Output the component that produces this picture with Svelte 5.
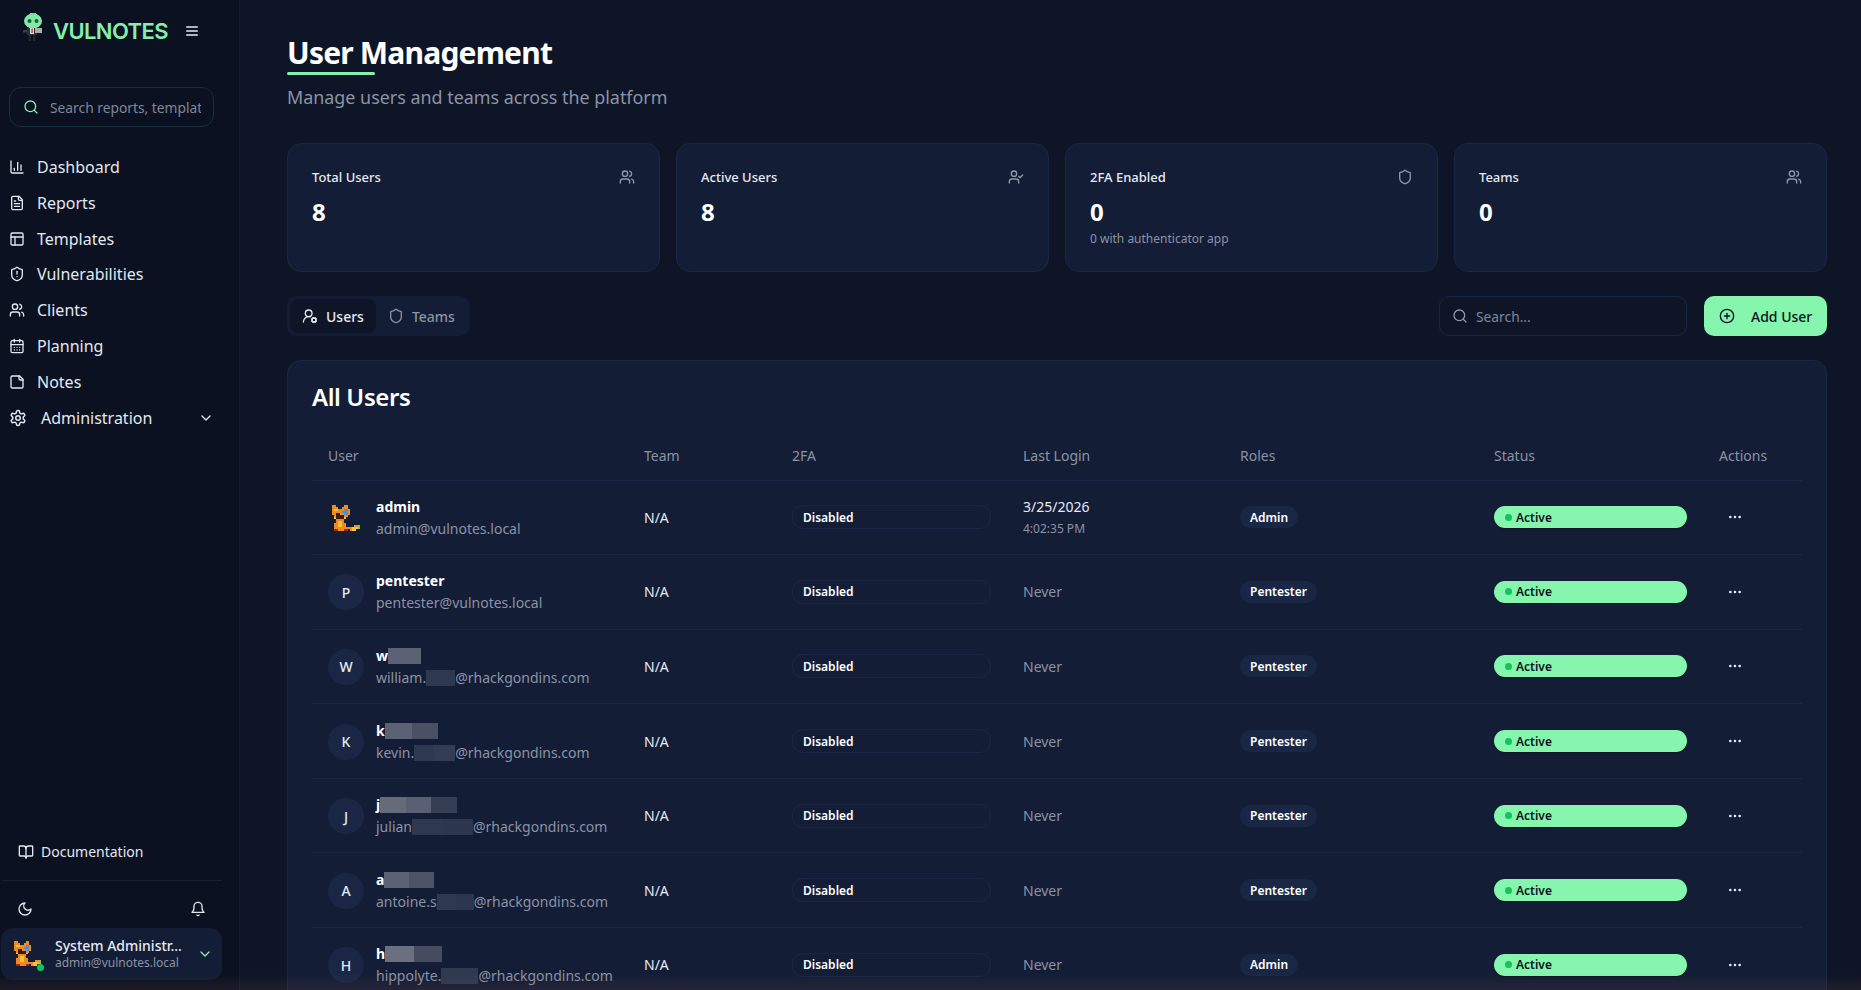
<script>
	const foxMap = [
		'oo....oo......',
		'ooo..ooo......',
		'oyyooobbo.....',
		'ooooobbbo.....',
		'ookkoobbo.....',
		'.okkkkoo......',
		'.ykkkky.......',
		'..oooo........',
		'..oyyo........',
		'.ooyyoo.......',
		'.ooyyoo....oog',
		'.oooooooooyyyg',
		'.rrooorr.oyy..'
	];
	const foxColors = { o: '#f08a1c', y: '#fbc23a', b: '#4f8fd0', k: '#3a1c14', r: '#a8261c', g: '#8fbf4a' };
	const foxPixels = foxMap.flatMap((row, y) =>
		[...row].flatMap((c, x) => (foxColors[c] ? [{ x, y, fill: foxColors[c] }] : []))
	);

	const nav = [
		{ icon: 'chart', label: 'Dashboard' },
		{ icon: 'file', label: 'Reports' },
		{ icon: 'layout', label: 'Templates' },
		{ icon: 'shieldAlert', label: 'Vulnerabilities' },
		{ icon: 'users', label: 'Clients' },
		{ icon: 'calendar', label: 'Planning' },
		{ icon: 'note', label: 'Notes' }
	];

	const stats = [
		{ label: 'Total Users', value: '8', icon: 'users' },
		{ label: 'Active Users', value: '8', icon: 'userCheck' },
		{ label: '2FA Enabled', value: '0', icon: 'shield', sub: '0 with authenticator app' },
		{ label: 'Teams', value: '0', icon: 'users' }
	];

	// blur: [width, colour] slices laid over the redacted part of a name or an email
	const users = [
		{ fox: true, name: 'admin', email: 'admin@vulnotes.local', role: 'Admin', login: ['3/25/2026', '4:02:35 PM'] },
		{ initial: 'P', name: 'pentester', email: 'pentester@vulnotes.local', role: 'Pentester' },
		{
			initial: 'W', name: 'w', nameBlur: [[33, '#5b6275']],
			email: 'william.', emailBlur: [[29, '#2e3850']], domain: '@rhackgondins.com', role: 'Pentester'
		},
		{
			initial: 'K', name: 'k', nameBlur: [[27, '#5b6275'], [26, '#4a5165']],
			email: 'kevin.', emailBlur: [[20, '#2e3850'], [21, '#333c54']], domain: '@rhackgondins.com', role: 'Pentester'
		},
		{
			initial: 'J', name: 'j', nameBlur: [[26, '#666b7c'], [25, '#5a6073'], [26, '#363e54']],
			email: 'julian', emailBlur: [[30, '#2e3850'], [31, '#2c364e']], domain: '@rhackgondins.com', role: 'Pentester'
		},
		{
			initial: 'A', name: 'a', nameBlur: [[25, '#5b6275'], [25, '#4d5468']],
			email: 'antoine.s', emailBlur: [[19, '#2f3950'], [18, '#2c364e']], domain: '@rhackgondins.com', role: 'Pentester'
		},
		{
			initial: 'H', name: 'h', nameBlur: [[29, '#6a7080'], [28, '#454c60']],
			email: 'hippolyte.', emailBlur: [[37, '#2f3950']], domain: '@rhackgondins.com', role: 'Admin'
		}
	];
</script>

{#snippet icon(name, size = 16)}
	<svg class="icon" width={size} height={size} viewBox="0 0 24 24" fill="none" stroke="currentColor" stroke-width="2" stroke-linecap="round" stroke-linejoin="round">
		{#if name === 'chart'}
			<path d="M3 3v16a2 2 0 0 0 2 2h16" /><path d="M18 17V9" /><path d="M13 17V5" /><path d="M8 17v-3" />
		{:else if name === 'file'}
			<path d="M15 2H6a2 2 0 0 0-2 2v16a2 2 0 0 0 2 2h12a2 2 0 0 0 2-2V7Z" /><path d="M14 2v4a2 2 0 0 0 2 2h4" /><path d="M10 9H8" /><path d="M16 13H8" /><path d="M16 17H8" />
		{:else if name === 'layout'}
			<rect width="18" height="18" x="3" y="3" rx="2" /><path d="M3 9h18" /><path d="M9 21V9" />
		{:else if name === 'shieldAlert'}
			<path d="M20 13c0 5-3.5 7.5-7.66 8.95a1 1 0 0 1-.67-.01C7.5 20.5 4 18 4 13V6a1 1 0 0 1 1-1c2 0 4.5-1.2 6.24-2.72a1.17 1.17 0 0 1 1.52 0C14.51 3.81 17 5 19 5a1 1 0 0 1 1 1z" /><path d="M12 8v4" /><path d="M12 16h.01" />
		{:else if name === 'shield'}
			<path d="M20 13c0 5-3.5 7.5-7.66 8.95a1 1 0 0 1-.67-.01C7.5 20.5 4 18 4 13V6a1 1 0 0 1 1-1c2 0 4.5-1.2 6.24-2.72a1.17 1.17 0 0 1 1.52 0C14.51 3.81 17 5 19 5a1 1 0 0 1 1 1z" />
		{:else if name === 'users'}
			<path d="M16 21v-2a4 4 0 0 0-4-4H6a4 4 0 0 0-4 4v2" /><circle cx="9" cy="7" r="4" /><path d="M22 21v-2a4 4 0 0 0-3-3.87" /><path d="M16 3.13a4 4 0 0 1 0 7.75" />
		{:else if name === 'userCheck'}
			<path d="M16 21v-2a4 4 0 0 0-4-4H6a4 4 0 0 0-4 4v2" /><circle cx="9" cy="7" r="4" /><polyline points="16 11 18 13 22 9" />
		{:else if name === 'userCog'}
			<path d="M2 21a8 8 0 0 1 10.434-7.62" /><circle cx="10" cy="8" r="5" /><circle cx="18" cy="18" r="3" /><path d="m14.305 19.53.923-.382" /><path d="m15.228 16.852-.923-.383" /><path d="m16.852 15.228-.383-.923" /><path d="m16.852 20.772-.383.924" /><path d="m19.148 15.228.383-.923" /><path d="m19.53 21.696-.382-.924" /><path d="m20.772 16.852.924-.383" /><path d="m20.772 19.148.924.383" />
		{:else if name === 'calendar'}
			<path d="M8 2v4" /><path d="M16 2v4" /><rect width="18" height="18" x="3" y="4" rx="2" /><path d="M3 10h18" /><path d="M8 14h.01" /><path d="M12 14h.01" /><path d="M16 14h.01" /><path d="M8 18h.01" /><path d="M12 18h.01" /><path d="M16 18h.01" />
		{:else if name === 'note'}
			<path d="M16 3H5a2 2 0 0 0-2 2v14a2 2 0 0 0 2 2h14a2 2 0 0 0 2-2V8Z" /><path d="M15 3v4a2 2 0 0 0 2 2h4" />
		{:else if name === 'gear'}
			<path d="M12.22 2h-.44a2 2 0 0 0-2 2v.18a2 2 0 0 1-1 1.73l-.43.25a2 2 0 0 1-2 0l-.15-.08a2 2 0 0 0-2.73.73l-.22.38a2 2 0 0 0 .73 2.73l.15.1a2 2 0 0 1 1 1.72v.51a2 2 0 0 1-1 1.74l-.15.09a2 2 0 0 0-.73 2.73l.22.38a2 2 0 0 0 2.73.73l.15-.08a2 2 0 0 1 2 0l.43.25a2 2 0 0 1 1 1.73V20a2 2 0 0 0 2 2h.44a2 2 0 0 0 2-2v-.18a2 2 0 0 1 1-1.73l.43-.25a2 2 0 0 1 2 0l.15.08a2 2 0 0 0 2.73-.73l.22-.39a2 2 0 0 0-.73-2.73l-.15-.08a2 2 0 0 1-1-1.74v-.5a2 2 0 0 1 1-1.74l.15-.09a2 2 0 0 0 .73-2.73l-.22-.38a2 2 0 0 0-2.73-.73l-.15.08a2 2 0 0 1-2 0l-.43-.25a2 2 0 0 1-1-1.73V4a2 2 0 0 0-2-2z" /><circle cx="12" cy="12" r="3" />
		{:else if name === 'chevron'}
			<path d="m6 9 6 6 6-6" />
		{:else if name === 'book'}
			<path d="M12 7v14" /><path d="M3 18a1 1 0 0 1-1-1V4a1 1 0 0 1 1-1h5a4 4 0 0 1 4 4 4 4 0 0 1 4-4h5a1 1 0 0 1 1 1v13a1 1 0 0 1-1 1h-6a3 3 0 0 0-3 3 3 3 0 0 0-3-3z" />
		{:else if name === 'moon'}
			<path d="M12 3a6 6 0 0 0 9 9 9 9 0 1 1-9-9Z" />
		{:else if name === 'bell'}
			<path d="M6 8a6 6 0 0 1 12 0c0 7 3 9 3 9H3s3-2 3-9" /><path d="M10.3 21a1.94 1.94 0 0 0 3.4 0" />
		{:else if name === 'menu'}
			<path d="M4 6h16" /><path d="M4 12h16" /><path d="M4 18h16" />
		{:else if name === 'search'}
			<circle cx="11" cy="11" r="8" /><path d="m21 21-4.3-4.3" />
		{:else if name === 'plus'}
			<circle cx="12" cy="12" r="10" /><path d="M8 12h8" /><path d="M12 8v8" />
		{:else if name === 'dots'}
			<circle cx="12" cy="12" r="1" /><circle cx="19" cy="12" r="1" /><circle cx="5" cy="12" r="1" />
		{/if}
	</svg>
{/snippet}

{#snippet fox(width)}
	<svg class="fox" {width} viewBox="0 0 14 13" shape-rendering="crispEdges">
		{#each foxPixels as p}
			<rect x={p.x} y={p.y} width="1" height="1" fill={p.fill} />
		{/each}
	</svg>
{/snippet}

{#snippet blur(slices)}
	<span class="blur">{#each slices as [w, c]}<i style="width:{w}px;background:{c}"></i>{/each}</span>
{/snippet}

<div class="shell">
	<aside class="sidebar">
		<div class="brand">
			<svg class="mascot" width="22" height="28" viewBox="0 0 22 28">
				<ellipse cx="11" cy="8" rx="9" ry="7.5" fill="#7eeaa2" />
				<rect x="8" y="0" width="6" height="2" fill="#6fdc94" />
				<circle cx="7.5" cy="8" r="2" fill="#24574a" />
				<circle cx="14.5" cy="8" r="2" fill="#24574a" />
				<rect x="5" y="15" width="10" height="7" fill="#2a2f3a" />
				<rect x="8" y="15" width="4" height="6" fill="#d8dde2" />
				<rect x="9.4" y="15.5" width="1.4" height="4.5" fill="#b83a3a" />
				<rect x="13" y="15" width="7" height="5" fill="#a7b0ad" />
				<rect x="1" y="17" width="4" height="2.5" fill="#3a3f4a" />
				<rect x="6.5" y="22" width="2.4" height="6" fill="#23262f" />
				<rect x="11" y="22" width="2.4" height="6" fill="#23262f" />
			</svg>
			<span class="wordmark">VULNOTES</span>
			<span class="burger">{@render icon('menu')}</span>
		</div>

		<label class="side-search">
			{@render icon('search')}
			<input placeholder="Search reports, templates..." />
		</label>

		<nav class="nav">
			{#each nav as item}
				<a class="nav-item">{@render icon(item.icon)}<span>{item.label}</span></a>
			{/each}
			<a class="nav-item admin">
				{@render icon('gear', 18)}<span>Administration</span>{@render icon('chevron')}
			</a>
		</nav>

		<div class="side-bottom">
			<a class="doc-link">{@render icon('book')}<span>Documentation</span></a>
			<div class="side-tools">
				{@render icon('moon')}
				{@render icon('bell')}
			</div>
			<div class="me">
				<span class="me-avatar">{@render fox(27)}<b class="online"></b></span>
				<span class="me-text">
					<strong>System Administr...</strong>
					<small>admin@vulnotes.local</small>
				</span>
				<span class="me-chevron">{@render icon('chevron')}</span>
			</div>
		</div>
	</aside>

	<main class="main">
		<header class="page-head">
			<h1>User Management</h1>
			<p>Manage users and teams across the platform</p>
		</header>

		<section class="stats">
			{#each stats as s}
				<div class="stat">
					<div class="stat-top"><span>{s.label}</span>{@render icon(s.icon)}</div>
					<div class="stat-value">{s.value}</div>
					{#if s.sub}<div class="stat-sub">{s.sub}</div>{/if}
				</div>
			{/each}
		</section>

		<div class="toolbar">
			<div class="tabs">
				<button class="tab active">{@render icon('userCog')}Users</button>
				<button class="tab">{@render icon('shield')}Teams</button>
			</div>
			<div class="actions">
				<label class="search">
					{@render icon('search')}
					<input placeholder="Search..." />
				</label>
				<button class="add">{@render icon('plus')}Add User</button>
			</div>
		</div>

		<section class="panel">
			<h2>All Users</h2>
			<table>
				<thead>
					<tr>
						<th>User</th><th>Team</th><th>2FA</th><th>Last Login</th><th>Roles</th><th>Status</th><th>Actions</th>
					</tr>
				</thead>
				<tbody>
					{#each users as u}
						<tr>
							<td>
								<div class="user">
									<span class="avatar" class:plain={u.fox}>
										{#if u.fox}{@render fox(28)}{:else}{u.initial}{/if}
									</span>
									<div class="user-text">
										<div class="name">{u.name}{#if u.nameBlur}{@render blur(u.nameBlur)}{/if}</div>
										<div class="email">{u.email}{#if u.emailBlur}{@render blur(u.emailBlur)}{/if}{u.domain ?? ''}</div>
									</div>
								</div>
							</td>
							<td class="team">N/A</td>
							<td><span class="badge-off">Disabled</span></td>
							<td>
								{#if u.login}
									<div class="date">{u.login[0]}</div>
									<div class="time">{u.login[1]}</div>
								{:else}
									<span class="never">Never</span>
								{/if}
							</td>
							<td><span class="role">{u.role}</span></td>
							<td><span class="status"><i></i>Active</span></td>
							<td><span class="more">{@render icon('dots')}</span></td>
						</tr>
					{/each}
				</tbody>
			</table>
		</section>
	</main>
</div>

<style>
	:global(body) {
		background: #0e1526;
		font-family: 'Noto Sans', sans-serif;
		color: #e6eaf2;
	}

	.shell {
		position: relative;
		display: flex;
		height: 100vh;
		overflow: hidden;
	}

	.shell::after {
		content: '';
		position: absolute;
		left: 0;
		right: 0;
		bottom: 0;
		height: 16px;
		background: linear-gradient(to bottom, transparent, rgba(130, 80, 70, 0.16));
		pointer-events: none;
	}

	.icon {
		flex: none;
		display: block;
	}

	.fox {
		display: block;
	}

	/* sidebar */
	.sidebar {
		flex: none;
		width: 240px;
		box-sizing: border-box;
		display: flex;
		flex-direction: column;
		background: #0b1120;
		border-right: 1px solid #131e36;
		padding-right: 17px;
	}

	.brand {
		display: flex;
		align-items: center;
		height: 62px;
		padding-left: 22px;
	}

	.mascot {
		margin-top: -8px;
	}

	.wordmark {
		margin-left: 9px;
		font-family: 'Inter', sans-serif;
		font-size: 22px;
		font-weight: 600;
		letter-spacing: -0.6px;
		color: #86efac;
	}

	.burger {
		margin-left: 16px;
		color: #e6eaf2;
	}

	.side-search {
		display: flex;
		align-items: center;
		gap: 11px;
		height: 40px;
		margin: 25px 8px 0 9px;
		padding: 0 12px 0 13px;
		box-sizing: border-box;
		border: 1px solid #15303a;
		border-radius: 12px;
		color: #86efac;
	}

	.side-search input,
	.search input {
		min-width: 0;
		flex: 1;
		padding: 0;
		border: 0;
		outline: 0;
		background: none;
		font: 13.8px 'Noto Sans', sans-serif;
		color: #e6eaf2;
	}

	.side-search input::placeholder,
	.search input::placeholder {
		color: #7f8798;
		opacity: 1;
	}

	.nav {
		display: flex;
		flex-direction: column;
		margin-top: 22px;
	}

	.nav-item {
		display: flex;
		align-items: center;
		gap: 12px;
		height: 35.85px;
		padding-left: 9px;
		font-size: 16px;
		color: #e2e8f0;
	}

	.nav-item.admin {
		gap: 14px;
		padding-right: 8px;
	}

	.nav-item.admin span {
		flex: 1;
	}

	.side-bottom {
		margin-top: auto;
		padding-bottom: 10px;
	}

	.doc-link {
		display: flex;
		align-items: center;
		gap: 7px;
		height: 27px;
		padding-left: 17px;
		padding-bottom: 15px;
		border-bottom: 1px solid #15213a;
		margin-left: 1px;
		font-size: 14px;
		color: #e2e8f0;
	}

	.side-tools {
		display: flex;
		justify-content: space-between;
		padding: 20px 16px 11px 17px;
		color: #e2e8f0;
	}

	.me {
		display: flex;
		align-items: center;
		height: 52px;
		margin-left: 1px;
		padding: 0 9px 0 13px;
		background: #131d35;
		border-radius: 12px;
	}

	.me-avatar {
		position: relative;
		flex: none;
		width: 41px;
	}

	.online {
		position: absolute;
		left: 23px;
		bottom: -4px;
		width: 7px;
		height: 7px;
		border-radius: 50%;
		background: #11c45c;
	}

	.me-text {
		flex: 1;
		min-width: 0;
		display: flex;
		flex-direction: column;
	}

	.me-text strong {
		font-size: 14px;
		line-height: 18px;
		font-weight: 500;
		color: #e6eaf2;
	}

	.me-text small {
		font-size: 12px;
		line-height: 16px;
		color: #8b93a5;
	}

	.me-chevron {
		color: #86efac;
	}

	/* main */
	.main {
		flex: 1;
		min-width: 0;
		padding: 35px 34px 0 47px;
	}

	.page-head h1 {
		position: relative;
		margin: 0;
		font-size: 30px;
		line-height: 36px;
		font-weight: 700;
		letter-spacing: -0.8px;
		color: #fff;
	}

	.page-head h1::after {
		content: '';
		position: absolute;
		left: 0;
		bottom: -4px;
		width: 88px;
		height: 3px;
		border-radius: 2px;
		background: #86efac;
	}

	.page-head p {
		margin: 14px 0 0;
		font-size: 17.9px;
		line-height: 24px;
		color: #8b93a5;
	}

	.stats {
		display: grid;
		grid-template-columns: repeat(4, 1fr);
		gap: 16px;
		margin-top: 34px;
	}

	.stat {
		box-sizing: border-box;
		min-height: 129px;
		padding: 23px 24px 24px;
		background: #131d35;
		border: 1px solid #1a2744;
		border-radius: 14px;
	}

	.stat-top {
		display: flex;
		justify-content: space-between;
		align-items: center;
		height: 20px;
		font-size: 13px;
		font-weight: 500;
		color: #e6eaf2;
	}

	.stat-top .icon {
		color: #8f98aa;
	}

	.stat-value {
		margin-top: 9px;
		font-size: 24px;
		line-height: 32px;
		font-weight: 700;
		color: #fff;
	}

	.stat-sub {
		margin-top: 3px;
		font-size: 12px;
		line-height: 16px;
		color: #8b93a5;
	}

	.toolbar {
		display: flex;
		justify-content: space-between;
		margin-top: 24px;
	}

	.tabs {
		display: flex;
		padding: 3px;
		background: #131d35;
		border-radius: 10px;
	}

	.tab {
		display: flex;
		align-items: center;
		gap: 8px;
		height: 34px;
		padding: 0 12px;
		border: 0;
		border-radius: 8px;
		background: none;
		font: 500 14px 'Noto Sans', sans-serif;
		color: #8b93a5;
	}

	.tab.active {
		background: #0e1526;
		color: #e6eaf2;
	}

	.actions {
		display: flex;
		gap: 17px;
	}

	.search {
		display: flex;
		align-items: center;
		gap: 8px;
		box-sizing: border-box;
		width: 248px;
		height: 40px;
		padding: 0 12px;
		background: #0e1526;
		border: 1px solid #1a2744;
		border-radius: 10px;
		color: #8f98aa;
	}

	.add {
		display: flex;
		align-items: center;
		gap: 16px;
		width: 123px;
		height: 40px;
		padding: 0 15px;
		border: 0;
		border-radius: 10px;
		background: #86f5ae;
		font: 500 14px 'Noto Sans', sans-serif;
		white-space: nowrap;
		color: #0a1120;
	}

	.panel {
		margin-top: 24px;
		padding: 22px 24px 0;
		background: #131d35;
		border: 1px solid #1a2744;
		border-radius: 14px;
	}

	.panel h2 {
		margin: 0;
		font-size: 24px;
		line-height: 28px;
		font-weight: 600;
		letter-spacing: -0.4px;
		color: #fff;
	}

	table {
		width: 100%;
		margin-top: 21px;
		table-layout: fixed;
		border-collapse: collapse;
	}

	th,
	td {
		box-sizing: border-box;
		padding: 0 16px;
		text-align: left;
		border-bottom: 1px solid #1a2744;
	}

	th {
		height: 48px;
		font-size: 14px;
		font-weight: 400;
		color: #8b93a5;
	}

	th:nth-child(1) { width: 316px; }
	th:nth-child(2) { width: 148px; }
	th:nth-child(3) { width: 231px; }
	th:nth-child(4) { width: 217px; }
	th:nth-child(5) { width: 254px; }
	th:nth-child(6) { width: 225px; }

	td {
		height: 74.6px;
		font-size: 14px;
	}

	.user {
		display: flex;
		align-items: center;
		gap: 12px;
		margin-top: 1px;
	}

	.avatar {
		flex: none;
		display: flex;
		align-items: center;
		justify-content: center;
		width: 36px;
		height: 36px;
		border-radius: 50%;
		background: #1a2744;
		font-weight: 500;
		color: #e6eaf2;
	}

	.avatar.plain {
		background: none;
	}

	.user-text {
		display: flex;
		flex-direction: column;
		gap: 2px;
		white-space: nowrap;
	}

	.name {
		line-height: 20px;
		font-weight: 700;
		color: #fff;
	}

	.email {
		line-height: 20px;
		color: #8b93a5;
	}

	.blur {
		display: inline-flex;
		vertical-align: -3px;
	}

	.blur i {
		display: block;
		height: 16px;
	}

	.team {
		color: #e6eaf2;
	}

	.badge-off {
		display: flex;
		align-items: center;
		height: 22px;
		padding: 0 10px;
		border: 1px solid #1a2744;
		border-radius: 11px;
		font-size: 12px;
		font-weight: 600;
		color: #fff;
	}

	.date {
		margin-top: 1px;
		line-height: 20px;
		color: #e6eaf2;
	}

	.time {
		margin-top: 2px;
		font-size: 12px;
		line-height: 20px;
		color: #8b93a5;
	}

	.never {
		color: #8b93a5;
	}

	.role {
		display: inline-flex;
		align-items: center;
		height: 22px;
		padding: 0 10px;
		border-radius: 11px;
		background: #1a2744;
		font-size: 12px;
		font-weight: 600;
		color: #fff;
	}

	.status {
		display: flex;
		align-items: center;
		gap: 4px;
		height: 22px;
		padding: 0 11px;
		border-radius: 11px;
		background: #86f5ae;
		box-shadow: 0 1px 1px #0a1120;
		font-size: 12px;
		font-weight: 600;
		color: #0a1120;
	}

	.status i {
		width: 7px;
		height: 7px;
		border-radius: 50%;
		background: #11c45c;
	}

	.more {
		display: block;
		width: 32px;
		padding-left: 8px;
		box-sizing: border-box;
		color: #e6eaf2;
	}
</style>
